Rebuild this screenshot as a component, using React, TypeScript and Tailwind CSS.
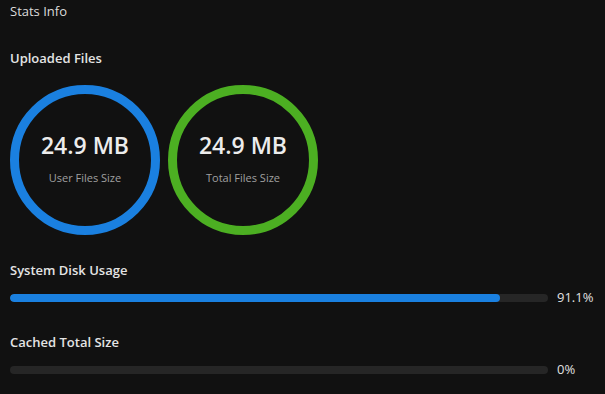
const font = { fontFamily: '"Open Sans", "Noto Sans", sans-serif' };

function Ring({ value, label, color }: { value: string; label: string; color: string }) {
  return (
    <div className={`w-[150px] h-[150px] rounded-full border-[9px] ${color} flex flex-col items-center justify-center`}>
      <div className="text-[23px] leading-[28px] font-semibold text-[#ececec] mt-[-4px]">{value}</div>
      <div className="text-[11px] leading-[14px] text-[#a0a0a0] mt-[12px]">{label}</div>
    </div>
  );
}

function UsageBar({ label, percent, mt }: { label: string; percent: number; mt: string }) {
  return (
    <div className={mt}>
      <div className="text-[13px] leading-[20px] font-semibold text-[#e4e4e4]">{label}</div>
      <div className="flex items-center h-[20px] mt-[8px]">
        <div className="w-[538px] h-[8px] rounded-full bg-[#262626] overflow-hidden">
          {percent > 0 && (
            <div className="h-full rounded-full bg-[#1a80e0]" style={{ width: `${percent}%` }} />
          )}
        </div>
        <span className="ml-[9px] text-[13px] text-[#e0e0e0]">{percent}%</span>
      </div>
    </div>
  );
}

export default function App() {
  return (
    <div className="w-[605px] h-[394px] bg-[#111111] overflow-hidden px-[10px]" style={font}>
      <div className="text-[13px] leading-[22px] text-[#dcdcdc]">Stats Info</div>
      <div className="mt-[26px] text-[13px] leading-[20px] font-semibold text-[#e4e4e4]">Uploaded Files</div>
      <div className="flex gap-[8px] mt-[17px]">
        <Ring value="24.9 MB" label="User Files Size" color="border-[#1a80e0]" />
        <Ring value="24.9 MB" label="Total Files Size" color="border-[#4caf22]" />
      </div>
      <UsageBar label="System Disk Usage" percent={91.1} mt="mt-[25px]" />
      <UsageBar label="Cached Total Size" percent={0} mt="mt-[24px]" />
    </div>
  );
}
